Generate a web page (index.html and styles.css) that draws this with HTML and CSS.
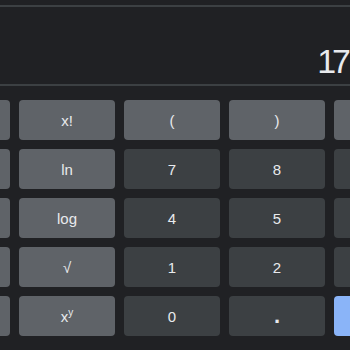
FILE: index.html
```html
<!DOCTYPE html>
<html lang="en">
  <head>
    <meta charset="UTF-8" />
    <meta name="viewport" content="width=device-width, initial-scale=1.0" />
    <title>Calculator</title>
    <link rel="stylesheet" href="styles.css">
  </head>
  <body>
    <div class="calc">
      <!-- result display -->
      <div class="display">
        <span class="result">17</span>
      </div>

      <!-- keypad (outer columns run past the window, labels kept as aria-label) -->
      <div class="keys">
        <button class="key fn" aria-label="Deg"></button>
        <button class="key fn">x!</button>
        <button class="key fn">(</button>
        <button class="key fn">)</button>
        <button class="key fn" aria-label="%"></button>

        <button class="key fn" aria-label="sin"></button>
        <button class="key fn">ln</button>
        <button class="key num">7</button>
        <button class="key num">8</button>
        <button class="key num" aria-label="9"></button>

        <button class="key fn" aria-label="cos"></button>
        <button class="key fn">log</button>
        <button class="key num">4</button>
        <button class="key num">5</button>
        <button class="key num" aria-label="6"></button>

        <button class="key fn" aria-label="tan"></button>
        <button class="key fn">√</button>
        <button class="key num">1</button>
        <button class="key num">2</button>
        <button class="key num" aria-label="3"></button>

        <button class="key fn" aria-label="EXP"></button>
        <button class="key fn">x<sup>y</sup></button>
        <button class="key num">0</button>
        <button class="key num dot">.</button>
        <button class="key eq" aria-label="="></button>
      </div>
    </div>
  </body>
</html>
```

FILE: styles.css
```css
html,
body {
  overflow: hidden;
}
body {
  margin: 0;
  padding-top: 5px;
  background: #202124;
  font-family: Arial, "Liberation Sans", sans-serif;
  color: #e8eaed;
}
.display {
  height: 77px;
  border-top: 2px solid #3c4043;
  border-bottom: 2px solid #3c4043;
  display: flex;
  justify-content: flex-end;
  align-items: flex-end;
}
.result {
  font-size: 34px;
  line-height: 34px;
  letter-spacing: -4px;
  margin-bottom: 6px;
  margin-right: 3px;
}
.keys {
  display: grid;
  grid-template-columns: repeat(5, 96px);
  grid-auto-rows: 40px;
  gap: 9px;
  margin-top: 14px;
  margin-left: -86px;
}
.key {
  border: none;
  border-radius: 4px;
  font-family: inherit;
  font-size: 15px;
  color: #e8eaed;
  padding: 0;
}
.key sup {
  font-size: 10px;
}
.fn {
  background: #5f6368;
}
.num {
  background: #3c4043;
}
.dot {
  font-size: 22px;
  font-weight: bold;
}
.eq {
  background: #8ab4f8;
  color: #202124;
}
```
